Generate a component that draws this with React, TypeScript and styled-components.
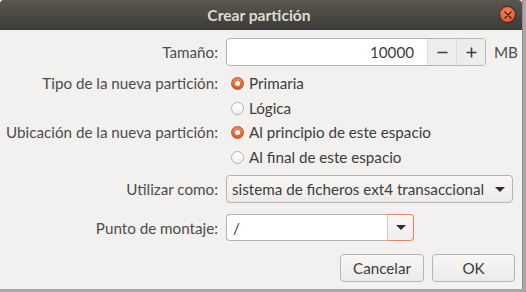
import React from "react";
import styled, { createGlobalStyle } from "styled-components";

const Global = createGlobalStyle`
  html, body { margin: 0; padding: 0; background: #a9a8a6; }
  body { font-family: "Lato", "Noto Sans", "DejaVu Sans", sans-serif; }
  * { box-sizing: border-box; }
`;

const Window = styled.div`
  width: 523px;
  height: 289px;
  background: #f2f1f0;
  display: flex;
  flex-direction: column;
  border-right: 1px solid #8f8e8c;
  font-size: 15.2px;
  color: #3c3c3c;
`;

const TitleBar = styled.div`
  height: 30px;
  flex: none;
  background: linear-gradient(#59574f, #3c3b37);
  display: flex;
  align-items: center;
  justify-content: center;
  position: relative;
  border-radius: 4px 4px 0 0;
`;

const Title = styled.div`
  color: #dfdbd2;
  font-weight: 700;
  font-size: 15.6px;
  margin-left: -4px;
`;

const CloseBtn = styled.div`
  position: absolute;
  right: 7px;
  top: 7px;
  width: 15px;
  height: 15px;
  border-radius: 50%;
  background: radial-gradient(circle at 50% 35%, #f4845a, #df4f1c);
  box-shadow: 0 0 0 1px #3a2a22;
  display: flex;
  align-items: center;
  justify-content: center;
`;

const Body = styled.div`
  display: flex;
  flex-direction: column;
`;

const Row = styled.div<{ $h: number; $mt: number }>`
  display: grid;
  grid-template-columns: 218px 1fr;
  column-gap: 8px;
  height: ${(p) => p.$h}px;
  margin-top: ${(p) => p.$mt}px;
  align-items: center;
`;

const Label = styled.div`
  text-align: right;
  white-space: nowrap;
  color: #4c4c4c;
`;

const Content = styled.div`
  display: flex;
  align-items: center;
  height: 100%;
`;

const SpinBox = styled.div`
  width: 260px;
  height: 28px;
  display: flex;
  border: 1px solid #b5b4b1;
  border-radius: 4px;
  background: #fff;
  overflow: hidden;
`;

const SpinText = styled.div`
  flex: 1;
  display: flex;
  align-items: center;
  justify-content: flex-end;
  padding-right: 13px;
  color: #3c3c3c;
`;

const SpinButton = styled.div`
  width: 29px;
  border-left: 1px solid #dcdbd9;
  background: #eeedeb;
  display: flex;
  align-items: center;
  justify-content: center;
  color: #3c3c3c;
`;

const Unit = styled.div`
  margin-left: 8px;
  color: #4c4c4c;
`;

const Radio = styled.div<{ $on?: boolean }>`
  width: 13px;
  height: 13px;
  border-radius: 50%;
  margin-left: 5px;
  margin-right: 5px;
  flex: none;
  display: flex;
  align-items: center;
  justify-content: center;
  border: 1px solid ${(p) => (p.$on ? "#c24e1f" : "#b3b2af")};
  background: ${(p) =>
    p.$on ? "linear-gradient(#f08a5d, #e0561f)" : "linear-gradient(#ffffff, #f1f0ef)"};
  &::after {
    content: "";
    display: ${(p) => (p.$on ? "block" : "none")};
    width: 5px;
    height: 5px;
    border-radius: 50%;
    background: #ffffff;
  }
`;

const Combo = styled.div`
  width: 287px;
  height: 28px;
  border: 1px solid #b5b4b1;
  border-radius: 4px;
  background: linear-gradient(#f8f7f6, #ecebe9);
  display: flex;
  align-items: center;
  justify-content: space-between;
  padding: 0 7px 0 5px;
  white-space: nowrap;
  color: #3c3c3c;
`;

const Arrow = styled.span`
  width: 0;
  height: 0;
  border-left: 5px solid transparent;
  border-right: 5px solid transparent;
  border-top: 5px solid #2e2e2e;
`;

const EntryCombo = styled.div`
  width: 188px;
  height: 27px;
  display: flex;
`;

const EntryPart = styled.div`
  flex: 1;
  background: #fff;
  border: 1px solid #b5b4b1;
  border-right: none;
  border-radius: 4px 0 0 4px;
  display: flex;
  align-items: center;
  padding-left: 6px;
  color: #3c3c3c;
`;

const DropPart = styled.div`
  width: 27px;
  background: linear-gradient(#f8f7f6, #efeeec);
  border: 1px solid #e2835a;
  border-left: 1px solid #c8c7c4;
  border-radius: 0 4px 4px 0;
  display: flex;
  align-items: center;
  justify-content: center;
`;

const Actions = styled.div`
  display: flex;
  justify-content: flex-end;
  gap: 8px;
  margin-top: 13px;
  padding-right: 7px;
`;

const Button = styled.div<{ $w: number }>`
  width: ${(p) => p.$w}px;
  height: 28px;
  border: 1px solid #b5b4b1;
  border-radius: 4px;
  background: linear-gradient(#f8f7f6, #ecebe9);
  display: flex;
  align-items: center;
  justify-content: center;
  color: #3c3c3c;
`;

export default function App() {
  return (
    <>
      <Global />
      <Window>
        <TitleBar>
          <Title>Crear partición</Title>
          <CloseBtn>
            <svg width="8" height="8" viewBox="0 0 8 8">
              <path d="M1 1L7 7M7 1L1 7" stroke="#3b2418" strokeWidth="1.4" strokeLinecap="round" />
            </svg>
          </CloseBtn>
        </TitleBar>
        <Body>
          <Row $h={28} $mt={8}>
            <Label>Tamaño:</Label>
            <Content>
              <SpinBox>
                <SpinText>10000</SpinText>
                <SpinButton>
                  <svg width="11" height="11" viewBox="0 0 11 11">
                    <path d="M0.5 5.5H10.5" stroke="#3c3c3c" strokeWidth="1.6" />
                  </svg>
                </SpinButton>
                <SpinButton>
                  <svg width="11" height="11" viewBox="0 0 11 11">
                    <path d="M0.5 5.5H10.5M5.5 0.5V10.5" stroke="#3c3c3c" strokeWidth="1.6" />
                  </svg>
                </SpinButton>
              </SpinBox>
              <Unit>MB</Unit>
            </Content>
          </Row>
          <Row $h={24} $mt={5}>
            <Label>Tipo de la nueva partición:</Label>
            <Content>
              <Radio $on />
              Primaria
            </Content>
          </Row>
          <Row $h={24} $mt={1}>
            <Label />
            <Content>
              <Radio />
              Lógica
            </Content>
          </Row>
          <Row $h={24} $mt={0}>
            <Label>Ubicación de la nueva partición:</Label>
            <Content>
              <Radio $on />
              Al principio de este espacio
            </Content>
          </Row>
          <Row $h={24} $mt={1}>
            <Label />
            <Content>
              <Radio />
              Al final de este espacio
            </Content>
          </Row>
          <Row $h={28} $mt={6}>
            <Label>Utilizar como:</Label>
            <Content>
              <Combo>
                sistema de ficheros ext4 transaccional
                <Arrow />
              </Combo>
            </Content>
          </Row>
          <Row $h={27} $mt={11}>
            <Label>Punto de montaje:</Label>
            <Content>
              <EntryCombo>
                <EntryPart>/</EntryPart>
                <DropPart>
                  <Arrow />
                </DropPart>
              </EntryCombo>
            </Content>
          </Row>
          <Actions>
            <Button $w={84}>Cancelar</Button>
            <Button $w={83}>OK</Button>
          </Actions>
        </Body>
      </Window>
    </>
  );
}
